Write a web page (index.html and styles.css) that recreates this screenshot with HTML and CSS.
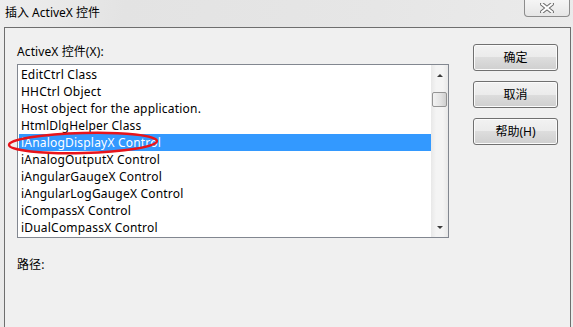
FILE: index.html
```html
<!DOCTYPE html>
<html lang="zh-CN">
<head>
    <meta charset="UTF-8">
    <title>插入 ActiveX 控件</title>
    <link rel="stylesheet" href="styles.css">
</head>
<body>
<div class="window">
    <div class="titlebar">
        <span class="title">插入 ActiveX 控件</span>
        <span class="close">
            <svg width="14" height="10" viewBox="0 0 14 10">
                <path d="M2 1 L12 9 M12 1 L2 9" stroke="#6d6d6d" stroke-width="4" stroke-linecap="square"/>
                <path d="M2 1 L12 9 M12 1 L2 9" stroke="#fff" stroke-width="2" stroke-linecap="square"/>
            </svg>
        </span>
    </div>
    <div class="client">
        <div class="main">
            <div class="label">ActiveX 控件(X):</div>
            <div class="listbox">
                <ul class="items">
                    <li>EditCtrl Class</li>
                    <li>HHCtrl Object</li>
                    <li>Host object for the application.</li>
                    <li>HtmlDlgHelper Class</li>
                    <li class="current">iAnalogDisplayX Control</li>
                    <li>iAnalogOutputX Control</li>
                    <li>iAngularGaugeX Control</li>
                    <li>iAngularLogGaugeX Control</li>
                    <li>iCompassX Control</li>
                    <li>iDualCompassX Control</li>
                </ul>
                <div class="scrollbar">
                    <span class="arrow up"></span>
                    <span class="thumb"></span>
                    <span class="track"></span>
                    <span class="arrow down"></span>
                </div>
            </div>
            <div class="label path">路径:</div>
        </div>
        <div class="buttons">
            <div class="btn">确定</div>
            <div class="btn">取消</div>
            <div class="btn">帮助(H)</div>
        </div>
        <svg class="mark" width="162" height="30" viewBox="0 0 162 30">
            <ellipse cx="80" cy="15" rx="74" ry="10" fill="none" stroke="#e8141b" stroke-width="2.4" transform="rotate(-1.5 80 15)"/>
        </svg>
    </div>
</div>
</body>
</html>
```

FILE: styles.css
```css
* {
    padding: 0;
    margin: 0;
    list-style: none;
    box-sizing: border-box;
}

body {
    width: 573px;
    height: 327px;
    overflow: hidden;
    font-family: "Noto Sans", "Noto Sans CJK SC", sans-serif;
    font-size: 12px;
    color: #000;
}

.window {
    width: 573px;
    height: 327px;
    display: flex;
    flex-direction: column;
    background: linear-gradient(100deg, #eeeeee 0%, #e3e3e3 20%, #e6e6e6 60%, #ececec 100%);
}

.titlebar {
    height: 27px;
    flex: none;
    display: flex;
    align-items: flex-start;
    justify-content: space-between;
    padding-left: 5px;
    padding-right: 3px;
}

.title {
    line-height: 15px;
    margin-top: 5px;
}

.close {
    width: 46px;
    height: 18px;
    margin-top: -1px;
    border: 1px solid #8c8c8c;
    border-top: 0;
    border-radius: 0 0 4px 4px;
    background: linear-gradient(#f6f6f6, #e6e6e6);
    display: flex;
    align-items: center;
    justify-content: center;
}

.client {
    flex: 1;
    margin-left: 4px;
    margin-right: 2px;
    border: 1px solid #6e6e6e;
    border-bottom: 0;
    background: #f0f0f0;
    display: flex;
    position: relative;
}

.main {
    padding: 16px 0 0 12px;
}

.label {
    line-height: 15px;
    height: 15px;
    margin-bottom: 5px;
    letter-spacing: 0.1px;
}

.path {
    margin-top: 19px;
}

.listbox {
    width: 432px;
    height: 174px;
    border: 1px solid #828790;
    background: #fff;
    padding: 1px 0 1px 1px;
    display: flex;
}

.items {
    flex: 1;
}

.items li {
    height: 17px;
    line-height: 17px;
    padding-left: 2px;
    white-space: nowrap;
    letter-spacing: 0.2px;
}

.items li.current {
    background: #3399ff;
    color: #fff;
}

.scrollbar {
    width: 17px;
    margin-top: -1px;
    margin-bottom: -1px;
    background: linear-gradient(90deg, #e8e8e8, #f4f4f4 30%, #f4f4f4 70%, #e8e8e8);
    display: flex;
    flex-direction: column;
    align-items: center;
}

.arrow {
    width: 0;
    height: 0;
    border-left: 3px solid transparent;
    border-right: 3px solid transparent;
    margin: 8px 0;
}

.arrow.up {
    border-bottom: 3px solid #3c3c3c;
    margin-top: 9px;
}

.arrow.down {
    border-top: 3px solid #3c3c3c;
    margin-bottom: 8px;
}

.thumb {
    width: 15px;
    height: 15px;
    margin-top: 7px;
    border: 1px solid #949494;
    border-radius: 2px;
    background: linear-gradient(90deg, #f2f2f2, #e2e2e2 60%, #cfcfcf);
}

.track {
    flex: 1;
}

.buttons {
    margin-left: 24px;
    padding-top: 16px;
    display: flex;
    flex-direction: column;
    gap: 10px;
}

.btn {
    width: 85px;
    height: 27px;
    line-height: 25px;
    text-align: center;
    border: 1px solid #707070;
    border-radius: 3px;
    background: linear-gradient(#f2f2f2, #ebebeb 50%, #dddddd 50%, #cfcfcf);
    box-shadow: inset 0 0 0 1px #fbfbfb;
}

.mark {
    position: absolute;
    left: -2px;
    top: 100px;
}
```
